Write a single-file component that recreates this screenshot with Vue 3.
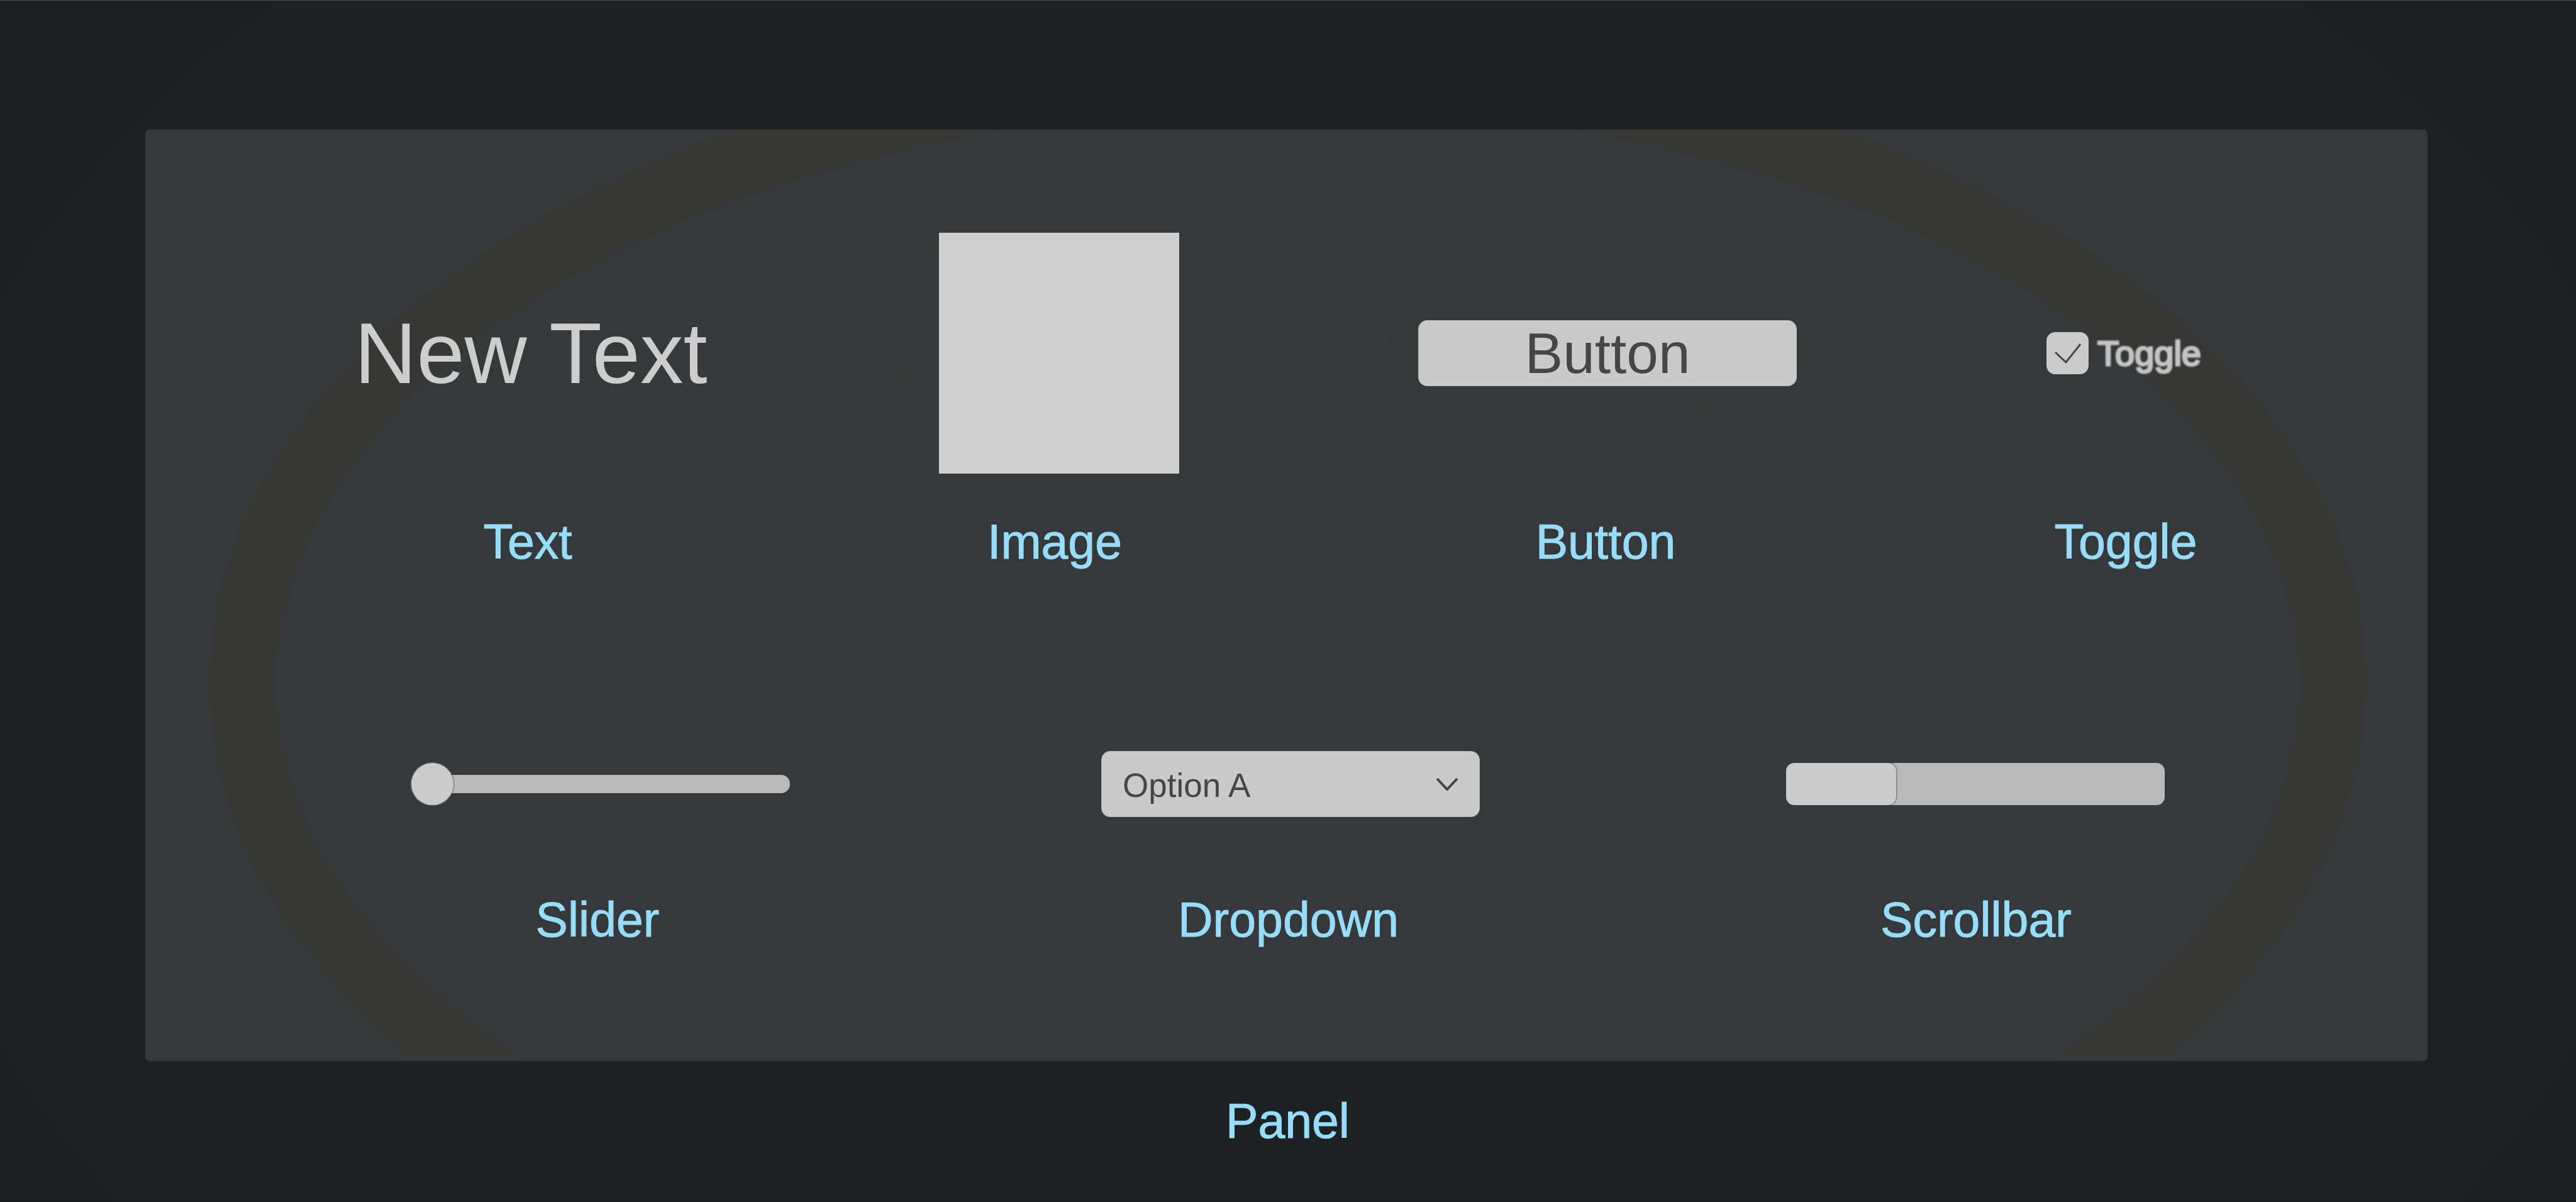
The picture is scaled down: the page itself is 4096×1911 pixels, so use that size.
<script setup>
import { ref } from 'vue'

const toggled = ref(true)
const level = ref(0)
const option = ref('Option A')
const options = ['Option A', 'Option B', 'Option C']
const thumbSize = 29
</script>

<template>
  <main class="page">
    <section class="panel" aria-labelledby="panel-caption">
      <svg class="shade" viewBox="248 221 3899 1590" preserveAspectRatio="none" aria-hidden="true">
        <ellipse cx="2200" cy="1165" rx="1785" ry="1040" fill="none" stroke="#373836" stroke-width="112" />
        <path
          transform="matrix(1.2117 0 0 1.014 1300 222)"
          fill="#373839"
          d="M215 190C205 330 185 440 175 560C165 720 130 820 132 920C140 1050 200 1130 270 1190C350 1260 420 1330 560 1345C760 1365 860 1365 960 1345C1100 1300 1160 1260 1250 1180C1330 1100 1380 1030 1377 990C1370 880 1340 800 1300 740C1250 670 1150 600 1150 545C1160 490 1300 480 1430 460C1250 465 1100 480 950 480C910 470 890 450 890 320C880 400 880 470 860 482C800 490 740 450 700 400C660 340 630 260 612 175L625 230C650 380 670 470 697 560C740 640 830 650 940 695C1060 760 1110 810 1130 870C1150 930 1150 1000 1130 1070C1090 1180 1020 1230 960 1250C850 1290 650 1290 520 1255C420 1200 370 1100 330 950C315 850 320 780 290 715C250 650 215 640 205 590C195 500 200 450 235 190Z"
        />
      </svg>

      <div class="controls controls-top">
        <span class="new-text">New Text</span>
        <div class="image" role="img" aria-labelledby="image-caption"></div>
        <button id="demo-button" class="box button" type="button">Button</button>
        <label class="toggle">
          <input id="demo-toggle" v-model="toggled" type="checkbox" />
          <svg v-if="toggled" class="check" viewBox="0 0 67 67" aria-hidden="true">
            <path d="M14 32L31 48L54 19" />
          </svg>
          <span>Toggle</span>
        </label>
      </div>
      <div class="captions captions-top">
        <span class="caption">Text</span>
        <span id="image-caption" class="caption">Image</span>
        <label class="caption" for="demo-button">Button</label>
        <label class="caption" for="demo-toggle">Toggle</label>
      </div>

      <div class="controls controls-bottom">
        <input id="demo-slider" v-model="level" class="slider" type="range" min="0" max="100" />
        <div class="dropdown">
          <select id="demo-dropdown" v-model="option" class="box">
            <option v-for="o in options" :key="o">{{ o }}</option>
          </select>
          <svg class="caret" viewBox="0 0 36 20" aria-hidden="true">
            <path d="M2 1L18 18L34 1" />
          </svg>
        </div>
        <div
          class="scrollbar"
          role="scrollbar"
          aria-labelledby="scrollbar-caption"
          aria-orientation="horizontal"
          aria-valuenow="0"
        >
          <div class="thumb" :style="{ width: thumbSize + '%' }"></div>
        </div>
      </div>
      <div class="captions captions-bottom">
        <label class="caption" for="demo-slider">Slider</label>
        <label class="caption" for="demo-dropdown">Dropdown</label>
        <span id="scrollbar-caption" class="caption">Scrollbar</span>
      </div>
    </section>
    <div id="panel-caption" class="caption panel-caption">Panel</div>
  </main>
</template>

<style>
body {
  margin: 0;
  background: #1e2121;
}
</style>

<style scoped>
.page {
  box-sizing: border-box;
  min-height: 100vh;
  padding: 205px 236px 0 231px;
  border-top: 1px solid #4b5050;
  border-bottom: 1px solid #161819;
  background: radial-gradient(ellipse 56% 84% at 50% 56%, #1e2121 95%, #1e1f22 97%, #1e1f22 99%, #1d2020 100%);
  font-family: "Liberation Sans", Arial, sans-serif;
}

.panel {
  position: relative;
  box-sizing: border-box;
  padding: 164px 0 181px;
  border-radius: 7px;
  background: #363939;
  overflow: hidden;
}

.shade {
  position: absolute;
  inset: 0;
  width: 100%;
  height: 100%;
}

.controls,
.captions {
  position: relative;
  display: grid;
  align-items: center;
  justify-items: center;
  padding-left: 200px;
}

/* The last track of each grid is the free space at the right edge. */
.controls-top {
  grid-template-columns: 826fr 854fr 890fr 752fr 107fr;
}

.captions-top {
  grid-template-columns: 816fr 860fr 892fr 762fr 99fr;
  margin-top: 64px;
}

.controls-bottom {
  grid-template-columns: 1047fr 1148fr 1030fr 204fr;
  margin-top: 289px;
}

.captions-bottom {
  grid-template-columns: 1038fr 1159fr 1028fr 204fr;
  margin-top: 119px;
}

.caption {
  color: #97ddf9;
  font-size: 77px;
  line-height: 88px;
  -webkit-text-stroke: 1px #97ddf9;
}

.panel-caption {
  margin-top: 51px;
  padding-left: 4px;
  text-align: center;
}

.new-text {
  color: #cdcdcd;
  font-size: 137px;
  line-height: 154px;
  white-space: nowrap;
}

.image {
  width: 382px;
  height: 383px;
  background: #cecece;
}

.box {
  box-sizing: border-box;
  width: 602px;
  height: 105px;
  margin: 0;
  border: 1px solid #b4b4b4;
  border-radius: 14px;
  background: #cacaca;
  color: #464646;
  font-family: inherit;
}

.button {
  padding: 0;
  font-size: 91px;
  line-height: 103px;
}

.toggle {
  position: relative;
  display: flex;
  align-items: center;
  gap: 14px;
  color: #c4c4c4;
  font-size: 56px;
  line-height: 66px;
}

.toggle input {
  appearance: none;
  width: 67px;
  height: 67px;
  margin: 0;
  border-radius: 14px;
  background: #cbcbcb;
}

.toggle span {
  -webkit-text-stroke: 3px #c4c4c4;
  filter: blur(1px);
}

.check {
  position: absolute;
  left: 0;
  width: 67px;
  height: 67px;
  pointer-events: none;
}

.check path,
.caret path {
  fill: none;
  stroke: #464646;
  stroke-width: 3;
}

.slider {
  appearance: none;
  width: 602px;
  height: 67px;
  margin: 0;
  background: transparent;
}

.slider::-webkit-slider-runnable-track {
  height: 29px;
  border-radius: 14px;
  background: #bababa;
}

.slider::-webkit-slider-thumb {
  appearance: none;
  width: 67px;
  height: 67px;
  margin-top: -19px;
  border-radius: 50%;
  background: #cbcbcb;
  box-shadow: 0 0 2px 1px #6a6a6a;
}

.dropdown {
  position: relative;
}

.dropdown select {
  display: block;
  appearance: none;
  padding: 3px 80px 0 33px;
  font-size: 53px;
}

.caret {
  position: absolute;
  top: 43px;
  right: 34px;
  width: 36px;
  height: 20px;
  pointer-events: none;
}

.caret path {
  stroke-width: 4;
}

.scrollbar {
  width: 602px;
  height: 67px;
  border-radius: 13px;
  background: #bababa;
  overflow: hidden;
}

.thumb {
  height: 100%;
  border-radius: 13px;
  background: #cbcbcb;
  box-shadow: 0 0 2px 1px #6a6a6a;
}
</style>
